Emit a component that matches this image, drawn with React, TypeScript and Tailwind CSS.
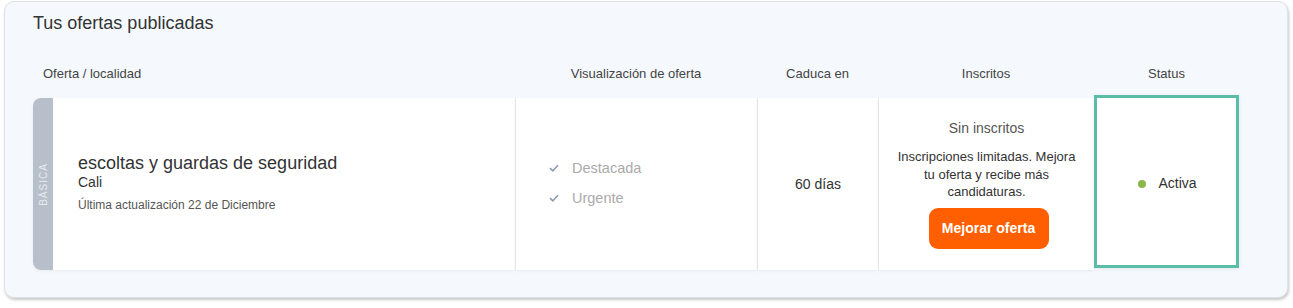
const cols = 'grid grid-cols-[482px_242px_121px_216px_145px]';

const Check = () => (
  <svg width="10" height="8" viewBox="0 0 10 8" className="mr-[13px]">
    <path d="M1 4.2 L3.8 6.8 L9 1.2" fill="none" stroke="#8e9bb0" strokeWidth="1.6" />
  </svg>
);

export default function App() {
  return (
    <div className="w-[1293px] h-[308px] bg-white pt-px pl-[4px] font-['Liberation_Sans',Arial,sans-serif]">
      <div className="w-[1284px] h-[297px] rounded-[10px] border border-[#dfe3e8] bg-[#f5f9fd] shadow-[1px_2px_3px_rgba(0,0,0,0.22)] pl-[28px] pt-[9px]">
        <h2 className="text-[18px] leading-[24px] text-[#333]">Tus ofertas publicadas</h2>

        {/* cabecera */}
        <div className={`${cols} mt-[30px] h-[17px] text-[13px] leading-[17px] text-[#444] w-[1206px]`}>
          <div className="pl-[10px]">Oferta / localidad</div>
          <div className="text-center">Visualización de oferta</div>
          <div className="text-center">Caduca en</div>
          <div className="text-center">Inscritos</div>
          <div className="text-center">Status</div>
        </div>

        {/* fila */}
        <div className={`${cols} mt-[16px] h-[172px] w-[1206px]`}>
          <div className="flex h-full rounded-l-[8px] bg-white shadow-[0_1px_3px_rgba(0,0,0,0.06)]">
            <div className="w-[20px] h-full rounded-l-[8px] bg-[#b7bfcb] flex items-center justify-center">
              <span className="-rotate-90 text-[10px] tracking-[1px] text-[#e6e9ee] whitespace-nowrap">BÁSICA</span>
            </div>
            <div className="flex flex-col justify-center pl-[25px] pb-[4px]">
              <div className="text-[18px] leading-[22px] text-[#333]">escoltas y guardas de seguridad</div>
              <div className="text-[14px] leading-[16px] text-[#333]">Cali</div>
              <div className="mt-[7px] text-[12px] leading-[16px] text-[#555]">Última actualización 22 de Diciembre</div>
            </div>
          </div>

          <div className="h-full bg-white border-l border-[#e6e6e6] flex flex-col justify-center pl-[33px] pb-[2px] gap-[12px] text-[14.5px] leading-[18px] text-[#aaa] shadow-[0_1px_3px_rgba(0,0,0,0.06)]">
            <div className="flex items-center"><Check />Destacada</div>
            <div className="flex items-center"><Check />Urgente</div>
          </div>

          <div className="h-full bg-white border-l border-[#e6e6e6] flex items-center justify-center text-[14px] text-[#333] shadow-[0_1px_3px_rgba(0,0,0,0.06)]">
            60 días
          </div>

          <div className="h-full bg-white border-l border-[#e6e6e6] flex flex-col items-center pt-[22px] text-center shadow-[0_1px_3px_rgba(0,0,0,0.06)]">
            <div className="text-[14px] leading-[17px] text-[#555]">Sin inscritos</div>
            <div className="mt-[11px] w-[190px] text-[13px] leading-[17.5px] text-[#333]">
              Inscripciones limitadas. Mejora tu oferta y recibe más candidaturas.
            </div>
            <button className="mt-[7px] ml-[4px] w-[120px] h-[41px] rounded-[9px] bg-[#ff5f00] text-white text-[14px] font-bold">
              Mejorar oferta
            </button>
          </div>

          <div className="-mt-[3px] h-[173px] bg-white border-[3px] border-[#5bbca8] flex items-center justify-center pt-[4px] shadow-[0_1px_4px_rgba(0,0,0,0.08)]">
            <span className="w-[8px] h-[8px] rounded-full bg-[#8bb74a] mr-[12px] ml-[2px]" />
            <span className="text-[14px] text-[#333]">Activa</span>
          </div>
        </div>
      </div>
    </div>
  );
}
